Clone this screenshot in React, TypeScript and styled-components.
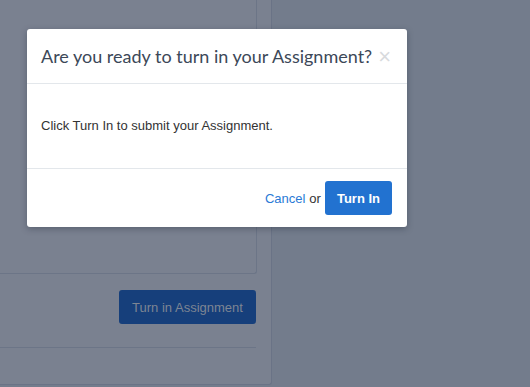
import React from "react";
import styled, { createGlobalStyle } from "styled-components";

const Global = createGlobalStyle`
  html, body { margin: 0; padding: 0; }
  body {
    width: 530px;
    height: 387px;
    overflow: hidden;
    background: #737c8c;
    font-family: "Liberation Sans", Arial, sans-serif;
  }
`;

const Page = styled.div`
  position: relative;
  width: 530px;
  height: 387px;
  display: flex;
  align-items: flex-start;
`;

const LeftPanel = styled.div`
  width: 272px;
  height: 386px;
  margin-top: -1px;
  box-sizing: border-box;
  background: #7a8190;
  border-right: 1px solid #6a7386;
  border-bottom: 1px solid #6a7386;
  border-bottom-right-radius: 3px;
  display: flex;
  flex-direction: column;
`;

const InnerCard = styled.div`
  width: 257px;
  height: 275px;
  box-sizing: border-box;
  border-right: 1px solid #6c7587;
  border-bottom: 1px solid #6c7587;
  border-bottom-right-radius: 3px;
`;

const ActionRow = styled.div`
  width: 256px;
  height: 74px;
  box-sizing: border-box;
  padding-top: 16px;
  display: flex;
  justify-content: flex-end;
  align-items: flex-start;
  border-bottom: 1px solid #6c7587;
`;

const DimButton = styled.div`
  width: 137px;
  height: 34px;
  box-sizing: border-box;
  background: #163f7b;
  border-radius: 3px;
  color: #7d8593;
  font-size: 13px;
  display: flex;
  align-items: center;
  justify-content: center;
`;

const Modal = styled.div`
  position: absolute;
  left: 27px;
  top: 29px;
  width: 380px;
  background: #ffffff;
  border-radius: 3px;
  box-shadow: 0 2px 6px rgba(30, 40, 55, 0.35);
  display: flex;
  flex-direction: column;
`;

const Header = styled.div`
  height: 55px;
  box-sizing: border-box;
  padding: 0 14px;
  display: flex;
  align-items: center;
  justify-content: space-between;
  border-bottom: 1px solid #e3e7eb;
`;

const Title = styled.h2`
  margin: 0;
  font-family: Lato, "Liberation Sans", sans-serif;
  font-weight: 400;
  font-size: 18px;
  white-space: nowrap;
  color: #3c4858;
`;

const Close = styled.span`
  font-family: "Liberation Sans", Arial, sans-serif;
  font-size: 22px;
  line-height: 1;
  color: #d8dadd;
  margin-top: 2px;
  margin-right: 2px;
`;

const Body = styled.div`
  height: 85px;
  box-sizing: border-box;
  padding: 0 14px 2px;
  display: flex;
  align-items: center;
  font-size: 13px;
  color: #333333;
  border-bottom: 1px solid #e3e7eb;
`;

const Footer = styled.div`
  height: 58px;
  box-sizing: border-box;
  padding: 0 15px;
  display: flex;
  align-items: center;
  justify-content: flex-end;
  gap: 4px;
  font-size: 13px;
  color: #333333;
`;

const Link = styled.a`
  color: #2a7ad6;
  text-decoration: none;
`;

const Primary = styled.button`
  height: 34px;
  padding: 0 12px;
  border: none;
  border-radius: 3px;
  background: #2272d0;
  color: #ffffff;
  font-family: "Liberation Sans", Arial, sans-serif;
  font-weight: 700;
  font-size: 13px;
`;

export default function App() {
  return (
    <>
      <Global />
      <Page>
        <LeftPanel>
          <InnerCard />
          <ActionRow>
            <DimButton>Turn in Assignment</DimButton>
          </ActionRow>
        </LeftPanel>
        <Modal>
          <Header>
            <Title>Are you ready to turn in your Assignment?</Title>
            <Close>×</Close>
          </Header>
          <Body>Click Turn In to submit your Assignment.</Body>
          <Footer>
            <Link href="#">Cancel</Link>
            <span>or</span>
            <Primary>Turn In</Primary>
          </Footer>
        </Modal>
      </Page>
    </>
  );
}
